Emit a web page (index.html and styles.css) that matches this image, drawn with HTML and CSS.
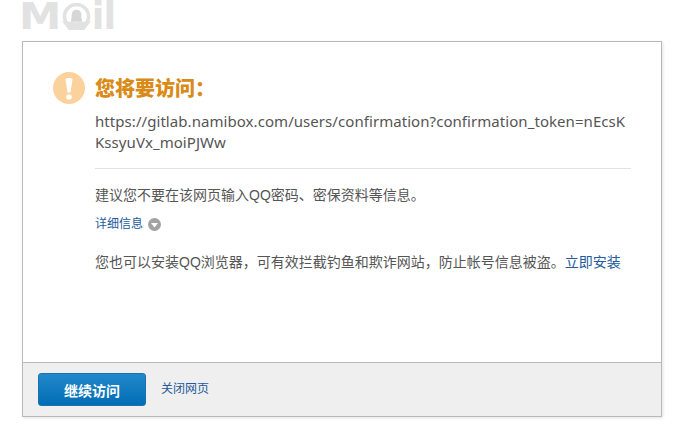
FILE: index.html
```html
<!DOCTYPE html>
<html lang="zh-CN">
<head>
<meta charset="utf-8">
<title>安全提示</title>
<link rel="stylesheet" href="styles.css">
</head>
<body>
<div class="page">
  <div class="logo">
    <span class="logo-m">M</span>
    <svg class="logo-o" width="31" height="27" viewBox="0 0 32 28">
      <circle cx="16" cy="14" r="12.500" fill="none" stroke="#e2e2e2" stroke-width="3.500"/>
      <path d="M1 19 L16 20 L31 19 L24 28 H8Z" fill="#e2e2e2"/>
      <path d="M10 19.500 C11 16 11 14 11 12 C11 9 13.500 7 16 7 C18.500 7 21 9 21 12 C21 14 21 16 22 19.500Z" fill="#d6d6d6"/>
    </svg>
    <span class="logo-il">il</span>
  </div>
  <main class="card">
    <div class="content">
      <header class="head">
        <svg class="warn" width="32" height="32" viewBox="0 0 32 32">
          <circle cx="16" cy="16" r="16" fill="#fbd19c"/>
          <path d="M12.500 7.500 C12.500 5.500 19.500 5.500 19.500 7.500 L17.500 20.500 H14.500Z" fill="#fff"/>
          <circle cx="16" cy="25" r="2.800" fill="#fff"/>
        </svg>
        <h1 class="title">您将要访问：</h1>
      </header>
      <p class="url">https://gitlab.namibox.com/users/confirmation?confirmation_token=nEcsKKssyuVx_moiPJWw</p>
      <hr class="rule">
      <p class="advice">建议您不要在该网页输入QQ密码、密保资料等信息。</p>
      <p class="details">
        <a class="link" href="#">详细信息</a>
        <svg class="chev" width="13" height="13" viewBox="0 0 13 13">
          <circle cx="6.500" cy="6.500" r="6.500" fill="#a3a3a3"/>
          <path d="M3 5 H10 L6.500 9.500Z" fill="#fff"/>
        </svg>
      </p>
      <p class="promo">您也可以安装QQ浏览器，可有效拦截钓鱼和欺诈网站，防止帐号信息被盗。<a class="link" href="#">立即安装</a></p>
    </div>
    <footer class="foot">
      <button class="btn" type="button">继续访问</button>
      <a class="link close" href="#">关闭网页</a>
    </footer>
  </main>
</div>
</body>
</html>
```

FILE: styles.css
```css
* { box-sizing: border-box; }
html, body { margin: 0; padding: 0; background: #fff; }
body {
  font-family: "Liberation Sans", "Noto Sans CJK SC", sans-serif;
  color: #555;
  overflow: hidden;
}
.page { width: 683px; height: 426px; padding-left: 22px; }
.logo {
  height: 41px;
  display: flex;
  align-items: flex-start;
  color: #e2e2e2;
  font-family: "DejaVu Sans", sans-serif;
  font-weight: 700;
  font-size: 37px;
  line-height: 33px;
}
.logo-m { margin-left: -3px; display: inline-block; transform: scaleX(1.15); transform-origin: left center; }
.logo-o { margin: 3px 0 0 5px; }
.logo-il { letter-spacing: -1px; }
.card {
  width: 640px;
  height: 376px;
  border: 1px solid #b9b9b9;
  box-shadow: 1px 1px 3px rgba(0,0,0,.12);
  display: flex;
  flex-direction: column;
}
.content { flex: 1; padding: 30px 30px 0 30px; }
.head { display: flex; align-items: center; gap: 10px; height: 32px; }
.warn { flex: none; }
.title { margin: 2px 0 0; font-size: 20px; font-weight: 900; color: #d98a17; line-height: 32px; }
.url {
  margin: 7px 0 0 42px;
  width: 532px;
  font-family: "Noto Sans", sans-serif;
  font-size: 15px;
  letter-spacing: .06px;
  line-height: 21px;
  word-break: break-all;
  color: #555;
}
.rule { margin: 15px 0 0 42px; border: 0; border-top: 1px solid #e2e2e2; width: 536px; }
.advice { margin: 17px 0 0 42px; font-size: 14px; line-height: 18px; }
.details { margin: 11px 0 0 42px; font-size: 12px; line-height: 18px; display: flex; align-items: center; gap: 5px; }
.promo { margin: 20px 0 0 42px; font-size: 14px; line-height: 18px; white-space: nowrap; }
.link { color: #235a9c; text-decoration: none; }
.foot {
  height: 54px;
  flex: none;
  background: #efefef;
  border-top: 1px solid #b9b9b9;
  padding: 10px 0 0 15px;
  display: flex;
  align-items: flex-start;
  gap: 15px;
}
.btn {
  width: 108px;
  height: 33px;
  border: 1px solid #1a72b0;
  border-radius: 3px;
  background: linear-gradient(#2189cb, #026db5);
  color: #fff;
  font: 700 14px "Liberation Sans", "Noto Sans CJK SC", sans-serif;
  padding: 0;
}
.close { font-size: 12px; line-height: 33px; }
```
